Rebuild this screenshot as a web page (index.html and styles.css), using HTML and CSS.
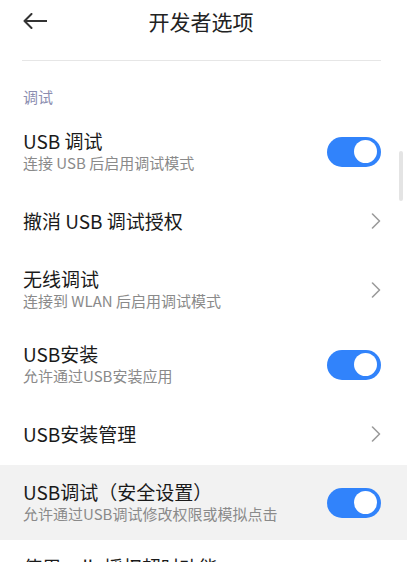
FILE: index.html
```html
<!DOCTYPE html>
<html lang="zh-CN">
<head>
<meta charset="utf-8">
<title>开发者选项</title>
<link rel="stylesheet" href="styles.css">
</head>
<body>
<div class="screen">
  <header class="topbar">
    <svg class="back" width="24" height="16" viewBox="0 0 24 16"><path d="M1.5 8H24M8.5 1L1.5 8L8.5 15" fill="none" stroke="#333" stroke-width="2" stroke-linecap="round" stroke-linejoin="round"/></svg>
    <h1 class="title">开发者选项</h1>
  </header>
  <div class="divider"></div>
  <div class="section-label">调试</div>
  <ul class="list">
    <li class="row two">
      <div class="text"><div class="t">USB 调试</div><div class="s">连接 USB 后启用调试模式</div></div>
      <span class="switch"><span class="knob"></span></span>
    </li>
    <li class="row one">
      <div class="text"><div class="t">撤消 USB 调试授权</div></div>
      <svg class="chev" width="10" height="16" viewBox="0 0 10 16"><path d="M1.5 1L8.5 8L1.5 15" fill="none" stroke="#9b9b9b" stroke-width="1.6" stroke-linecap="round" stroke-linejoin="round"/></svg>
    </li>
    <li class="row two">
      <div class="text"><div class="t">无线调试</div><div class="s">连接到 WLAN 后启用调试模式</div></div>
      <svg class="chev" width="10" height="16" viewBox="0 0 10 16"><path d="M1.5 1L8.5 8L1.5 15" fill="none" stroke="#9b9b9b" stroke-width="1.6" stroke-linecap="round" stroke-linejoin="round"/></svg>
    </li>
    <li class="row two">
      <div class="text"><div class="t">USB安装</div><div class="s">允许通过USB安装应用</div></div>
      <span class="switch"><span class="knob"></span></span>
    </li>
    <li class="row one">
      <div class="text"><div class="t">USB安装管理</div></div>
      <svg class="chev" width="10" height="16" viewBox="0 0 10 16"><path d="M1.5 1L8.5 8L1.5 15" fill="none" stroke="#9b9b9b" stroke-width="1.6" stroke-linecap="round" stroke-linejoin="round"/></svg>
    </li>
    <li class="row two active">
      <div class="text"><div class="t">USB调试（安全设置）</div><div class="s">允许通过USB调试修改权限或模拟点击</div></div>
      <span class="switch"><span class="knob"></span></span>
    </li>
    <li class="row two">
      <div class="text"><div class="t">使用 adb 授权超时功能</div><div class="s">禁用后 adb 授权将不会自动撤消</div></div>
      <span class="switch"><span class="knob"></span></span>
    </li>
  </ul>
  <div class="scrollbar"></div>
</div>
</body>
</html>
```
FILE: styles.css
```css
html, body {
  margin: 0;
  padding: 0;
  background: #fff;
}
body {
  font-family: "Noto Sans CJK SC", "Noto Sans", sans-serif;
  color: #1c1c1c;
  overflow: hidden;
}
.screen {
  position: relative;
  width: 407px;
  height: 562px;
  overflow: hidden;
}
.topbar {
  height: 41px;
  display: flex;
  align-items: center;
  padding-left: 23px;
  position: relative;
}
.back {
  display: block;
  flex: none;
}
.title {
  margin: 0;
  flex: 1;
  text-align: center;
  font-size: 21px;
  font-weight: 400;
  color: #222;
  padding-right: 52px;
  line-height: 28px;
}
.divider {
  margin: 19px 26px 0 22px;
  height: 1px;
  background: #e6e6e6;
}
.section-label {
  margin-top: 26px;
  padding-left: 23px;
  font-size: 15px;
  line-height: 20px;
  color: #8b8db0;
  margin-bottom: 7px;
}
.list {
  list-style: none;
  margin: 0;
  padding: 0;
}
.row {
  display: flex;
  align-items: center;
  justify-content: space-between;
  padding: 0 26px 0 23px;
}
.row.one { height: 63px; }
.row.two { height: 75px; }
.row.active { background: #f2f2f2; }
.t {
  font-size: 19px;
  line-height: 22px;
  color: #1a1a1a;
}
.s {
  font-size: 15px;
  line-height: 22px;
  color: #8a8a8a;
}
.chev {
  display: block;
  margin-right: 0;
}
.switch {
  flex: none;
  width: 54px;
  height: 30px;
  border-radius: 15px;
  background: #3183fb;
  display: flex;
  align-items: center;
  justify-content: flex-end;
  padding-right: 4px;
  box-sizing: border-box;
}
.knob {
  width: 23px;
  height: 23px;
  border-radius: 50%;
  background: #fff;
}
.scrollbar {
  position: absolute;
  right: 4px;
  top: 151px;
  width: 4px;
  height: 50px;
  border-radius: 2px;
  background: #e4e4e4;
}
```
